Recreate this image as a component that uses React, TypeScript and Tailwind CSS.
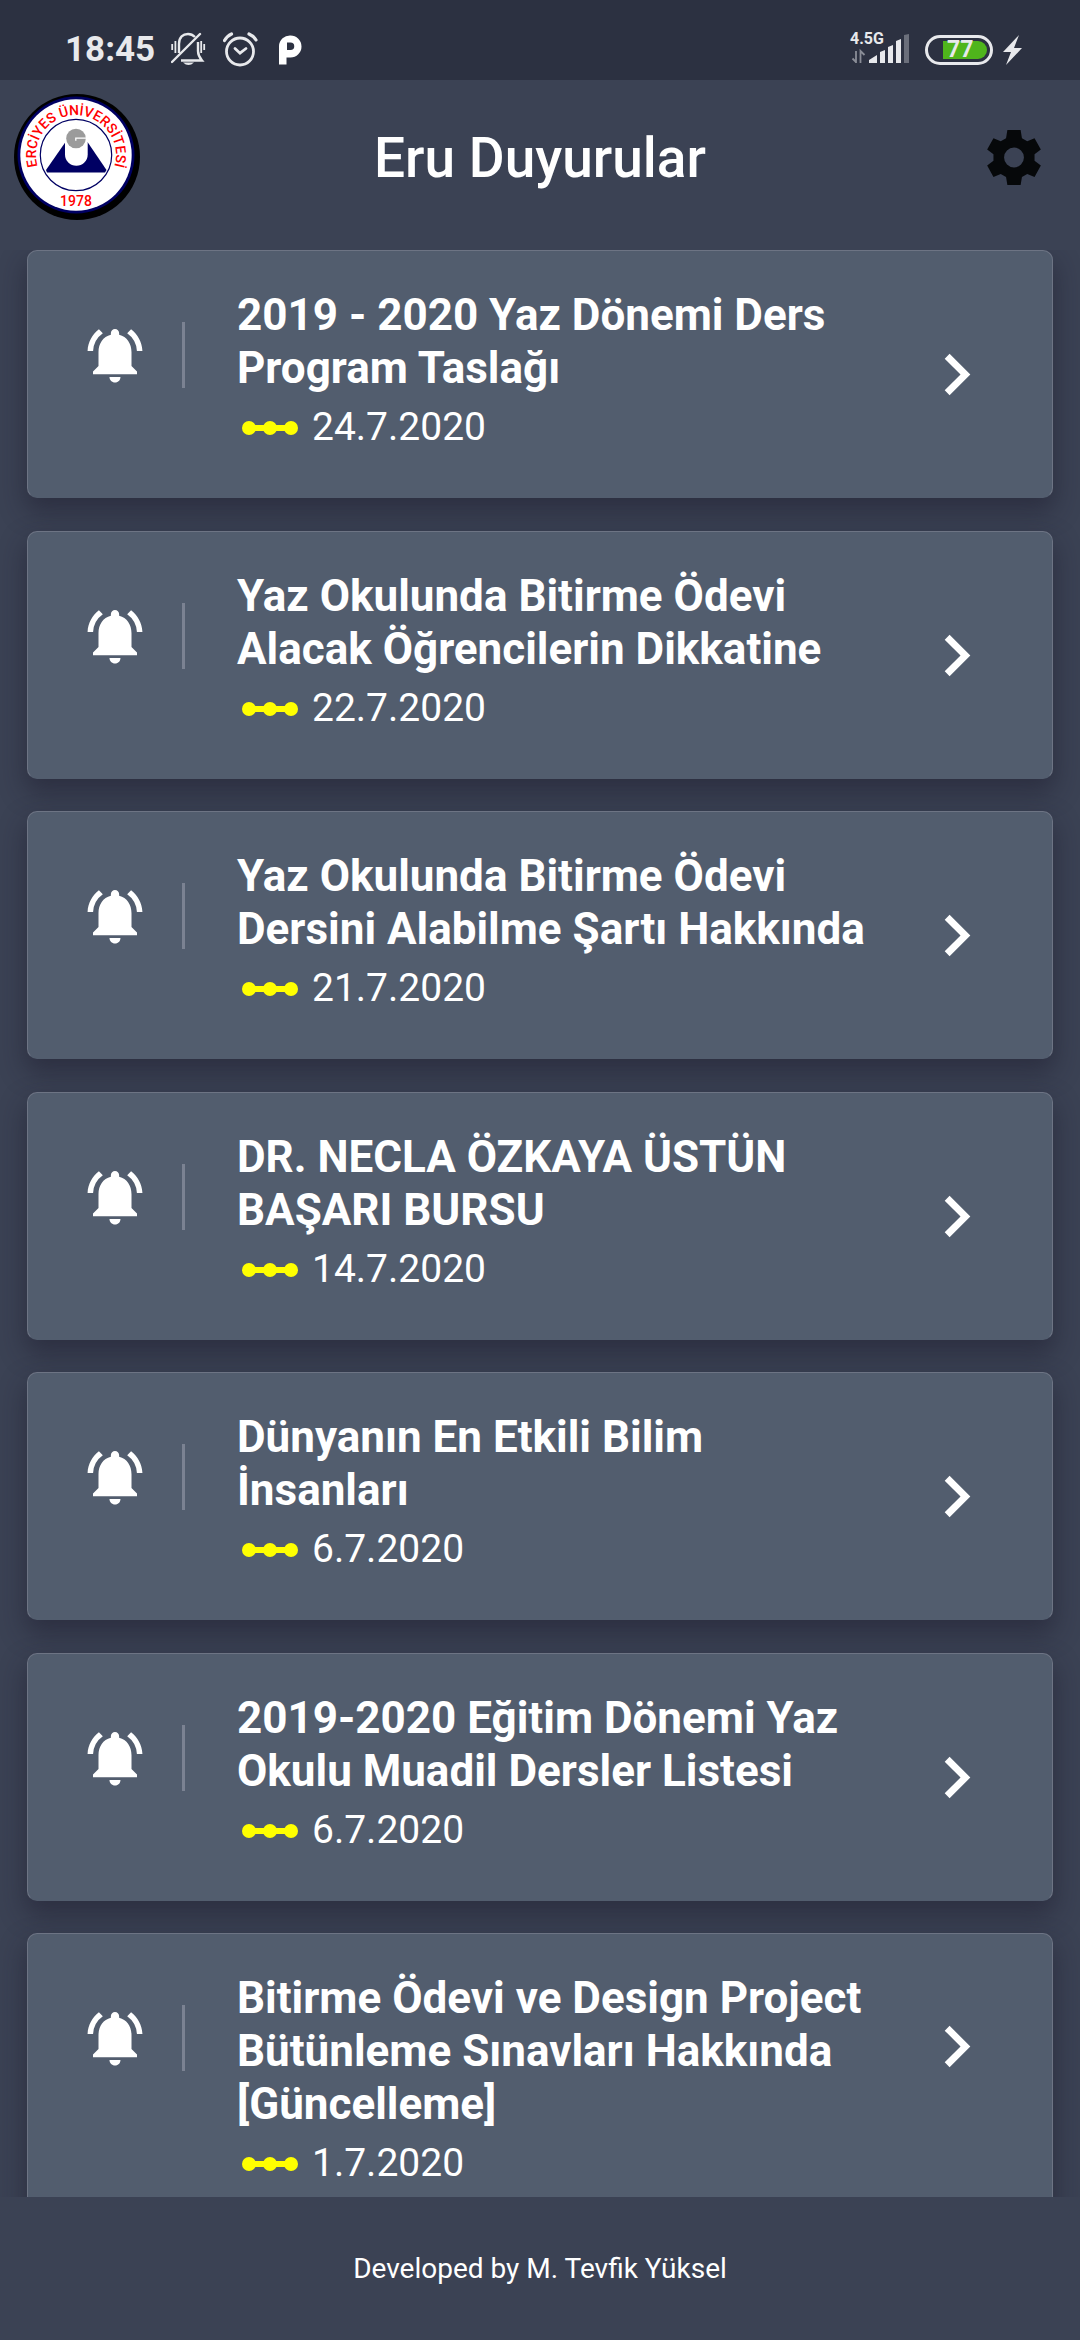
import { MdNotificationsActive, MdChevronRight } from "react-icons/md";

type Notice = { lines: string[]; date: string };

const notices: Notice[] = [
  { lines: ["2019 - 2020 Yaz Dönemi Ders", "Program Taslağı"], date: "24.7.2020" },
  { lines: ["Yaz Okulunda Bitirme Ödevi", "Alacak Öğrencilerin Dikkatine"], date: "22.7.2020" },
  { lines: ["Yaz Okulunda Bitirme Ödevi", "Dersini Alabilme Şartı Hakkında"], date: "21.7.2020" },
  { lines: ["DR. NECLA ÖZKAYA ÜSTÜN", "BAŞARI BURSU"], date: "14.7.2020" },
  { lines: ["Dünyanın En Etkili Bilim", "İnsanları"], date: "6.7.2020" },
  { lines: ["2019-2020 Eğitim Dönemi Yaz", "Okulu Muadil Dersler Listesi"], date: "6.7.2020" },
  {
    lines: ["Bitirme Ödevi ve Design Project", "Bütünleme Sınavları Hakkında", "[Güncelleme]"],
    date: "1.7.2020",
  },
];

function SilentBell() {
  return (
    <svg width="36" height="36" viewBox="0 0 36 36" fill="none" stroke="#e8e9ec" strokeWidth="2.4">
      <path d="M8 21V12C8 5 12 2 17 2c3 0 5 1 7 3M27 10v9c0 4 1 6 4 9.5H10" />
      <path d="M1 30 29 2" strokeLinecap="round" />
      <path d="M1.2 12v6M4.4 9v12M33.2 12v6M30.2 9v12" strokeWidth="1.8" />
      <path d="M12 30.500h11q-5.500 5-11 0z" fill="#e8e9ec" stroke="none" />
    </svg>
  );
}

function AlarmClock() {
  return (
    <svg width="36" height="36" viewBox="0 0 36 36" fill="none" stroke="#e8e9ec" strokeWidth="2.8" strokeLinecap="round">
      <circle cx="17" cy="19.5" r="13.5" />
      <path d="M12 16.5l5 4.700 6-4.700" />
      <path d="M1.500 8.500Q4 4 8.500 2M33 8Q30.500 4 26 2" strokeWidth="3.2" />
    </svg>
  );
}

function ParkingMark() {
  return (
    <svg width="23" height="30" viewBox="0 0 23 30" fill="white">
      <path
        fillRule="evenodd"
        d="M0 29.500V11A11 11 0 0 1 11.500 0.500A11 11 0 0 1 11.500 22.500H7.500V29.500zM8 7.500V15h3.500a3.700 3.700 0 0 0 0-7.500z"
      />
    </svg>
  );
}

function Signal() {
  return (
    <svg width="60" height="13" viewBox="0 0 60 13" overflow="visible">
      <path d="M6 1v12M6 12 2.500 8.500M10.500 13V1l4 4" stroke="#8a8d97" strokeWidth="1.8" fill="none" />
      <path d="M19 13v-3l8-5v8zM30 13V2l5-2v13zM38 13V-3l5-2v18zM46 13V-9l5-2v24z" fill="#e8e9ec" />
      <path d="M54 13v-28l5-1v29z" fill="#6b6f7b" />
    </svg>
  );
}

function Gear() {
  return (
    <svg width="54" height="55" viewBox="21 21 162 166" fill="currentColor">
      <path
        fillRule="evenodd"
        d="M82 21h40l4 25 16 9 22-9 19 34-19 14v20l19 14-19 35-22-9-16 9-4 24H82l-4-24-16-9-22 9-19-35 19-14V94L21 80l19-34 22 9 16-9zM102 74a30 30 0 1 0 0 60 30 30 0 0 0 0-60z"
      />
    </svg>
  );
}

function Crest() {
  return (
    <svg width="128" height="128" viewBox="0 0 128 128" role="img" aria-label="Erciyes Üniversitesi">
      <circle cx="64" cy="64" r="63" fill="black" />
      <circle cx="63" cy="62" r="58.5" fill="#000063" />
      <circle cx="63" cy="62" r="55.7" fill="white" />
      <circle cx="63" cy="62" r="35.7" fill="none" stroke="#000063" strokeWidth="1.2" />
      <path d="M33 77 52.500 49H74.500L93.500 77 92 79.500H34z" fill="#000063" />
      <path d="M52 44h22.700v17.500a11.350 11.350 0 0 1-22.700 0z" fill="white" />
      <circle cx="63" cy="45.5" r="9.8" fill="#9b9b9b" />
      <path d="M73.500 45.200H62.800v2.500" stroke="white" strokeWidth="1.3" fill="none" />
      <path id="crest-ring" d="M26.700 78.900A40 40 0 1 1 99.300 78.900" fill="none" />
      <text fill="#ff0000" fontFamily="Roboto, sans-serif" fontSize="14" fontWeight="500" textAnchor="middle">
        <textPath href="#crest-ring" startOffset="50%">
          ERCİYES ÜNİVERSİTESİ
        </textPath>
      </text>
      <text x="63" y="113" fill="#ff0000" fontFamily="Roboto, sans-serif" fontSize="14" fontWeight="500" textAnchor="middle">
        1978
      </text>
    </svg>
  );
}

function NoticeCard({ notice }: { notice: Notice }) {
  const tall = notice.lines.length > 2;
  return (
    <li className="odd:mb-[33px] even:mb-8">
      <button
        type="button"
        className="flex min-h-[248px] w-full items-start rounded-[10px] border border-[#6d7484] border-b-transparent bg-[#525d6e] pr-[54px] pb-8 pl-[54px] text-left shadow-[0_12px_26px_2px_rgba(26,24,42,0.45)]"
      >
        <MdNotificationsActive className="mt-[71px] size-[66px] shrink-0" />
        <span className="mt-[71px] ml-[34px] h-[66px] w-[3px] shrink-0 bg-[#7b8292]" />
        <span className="mt-[38px] ml-[52px] flex min-w-0 flex-1 flex-col">
          <span className="text-[44px] leading-[53px] font-bold">
            {notice.lines.map((line) => (
              <span key={line} className="block whitespace-nowrap">
                {line}
              </span>
            ))}
          </span>
          <span className="mt-[6px] flex items-center text-[39px] leading-[53px]">
            <svg width="56" height="14" viewBox="0 0 56 14" fill="#ffff00" className="mr-[14px] ml-[5px]">
              <circle cx="7" cy="7" r="7" />
              <circle cx="28" cy="7" r="7" />
              <circle cx="49" cy="7" r="7" />
              <path d="M7 4h42v6H7z" />
            </svg>
            {notice.date}
          </span>
        </span>
        <MdChevronRight className={tall ? "mt-[71px] size-[83px] shrink-0" : "mt-[82px] size-[83px] shrink-0"} />
      </button>
    </li>
  );
}

export default function App() {
  return (
    <div className="flex h-screen flex-col overflow-hidden bg-[#3b4254] font-['Roboto',sans-serif] text-white">
      <div className="flex h-20 shrink-0 items-center bg-[#2c3141] pt-5 pr-[58px] pl-[65px] text-[#e8e9ec]">
        <span className="mr-4 text-[35px] font-bold">18:45</span>
        <div className="flex items-center">
          <SilentBell />
          <span className="mr-5 ml-4">
            <AlarmClock />
          </span>
          <ParkingMark />
        </div>
        <div className="ml-auto flex items-center">
          <div className="mr-[15px] flex flex-col gap-[3px] pb-[7px]">
            <span className="text-[16px] leading-[17px] font-bold">4.5G</span>
            <Signal />
          </div>
          <div className="mr-[10px] flex h-[30px] w-[68px] items-center justify-end rounded-full border-[3px] border-[#e8e9ec] p-[3px]">
            <span className="flex h-[18px] w-11 items-center rounded-l-[2px] rounded-r-full bg-[#4fb51c] pl-1 text-[23px] leading-[18px] font-bold">
              77
            </span>
          </div>
          <svg width="19" height="30" viewBox="0 0 19 30" fill="#e8e9ec">
            <path d="M16 0 0 17h8L3 30 19 13h-8z" />
          </svg>
        </div>
      </div>
      <header className="grid h-[170px] shrink-0 grid-cols-[1fr_auto_1fr] items-center px-[13px] pb-4">
        <Crest />
        <h1 className="pt-[3px] text-[55px] font-medium">Eru Duyurular</h1>
        <button type="button" aria-label="Ayarlar" className="mr-[26px] justify-self-end text-[#06080a]">
          <Gear />
        </button>
      </header>
      <main className="min-h-0 flex-1">
        <ul className="h-full overflow-hidden px-[27px]">
          {notices.map((notice) => (
            <NoticeCard key={notice.lines.join(" ")} notice={notice} />
          ))}
        </ul>
      </main>
      <footer className="flex h-[143px] shrink-0 items-center justify-center bg-[#3b4254] text-[28px]">
        Developed by M. Tevfik Yüksel
      </footer>
    </div>
  );
}
